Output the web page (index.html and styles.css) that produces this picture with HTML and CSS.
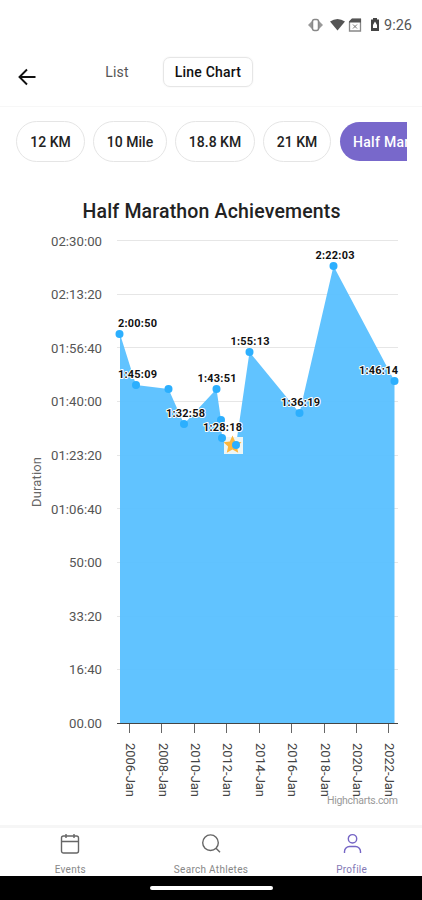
FILE: index.html
```html
<!DOCTYPE html>
<html lang="en">
  <head>
    <meta charset="UTF-8" />
    <meta name="viewport" content="width=device-width, initial-scale=1.0" />
    <title>Half Marathon Achievements</title>
    <link rel="stylesheet" href="styles.css">
  </head>
  <body>
    <div class="status-bar">
      <svg class="status-icons" width="74" height="20" viewBox="0 0 74 20">
        <!-- vibrate -->
        <path d="M4 6v8L0 10zM11 6v8l4-4z" fill="#999" />
        <rect x="4.500" y="4.500" width="6" height="11" rx="2" fill="#fff" stroke="#888" stroke-width="1.500" />
        <!-- wifi -->
        <path d="M22 6.500q7.500-5 15 0L29.500 15.500z" fill="#555" />
        <!-- sim card -->
        <path d="M44 4.500h8.500v11.500H41.500V7z" fill="#fff" stroke="#888" stroke-width="1.300" />
        <path d="M44 3.500h9v4H41V6.500z" fill="#555" />
        <path d="M45 9.500l4 4M49 9.500l-4 4" stroke="#777" />
        <!-- battery -->
        <path d="M65 3h4v1.500h2V16h-8V4.500h2z" fill="#444" />
        <path d="M67 6.500l-2 3.500v3h4v-3z" fill="#fff" />
      </svg>
      <span class="clock">9:26</span>
    </div>

    <header class="top-bar">
      <button class="back" type="button" aria-label="Back">
        <svg width="18" height="18" viewBox="0 0 18 18" fill="none" stroke="#111" stroke-width="1.900">
          <path d="M17.500 9H2M9 1.500L1.500 9 9 16.500" />
        </svg>
      </button>
      <button class="tab" type="button">List</button>
      <button class="tab tab-active" type="button">Line Chart</button>
    </header>

    <div class="chips">
      <button class="chip chip-12k" type="button">12 KM</button>
      <button class="chip chip-10m" type="button">10 Mile</button>
      <button class="chip chip-18k" type="button">18.8 KM</button>
      <button class="chip chip-21k" type="button">21 KM</button>
      <button class="chip chip-active" type="button">Half Marathon</button>
    </div>

    <main class="chart">
      <svg width="422" height="648" viewBox="0 177 422 648">
        <text class="chart-title" x="211.500" y="218" textLength="258">Half Marathon Achievements</text>

        <path class="grid" d="M117 240.500H398M117 294.500H398M117 347.500H398M117 401.500H398M117 455.500H398M117 508.500H398M117 562.500H398M117 616.500H398M117 669.500H398" />
        <path class="area" d="M120 723.500V334L136 385 168.500 389 184 424 216.500 389 221 420 222 438 236 445 249.500 352 299.500 413 333.500 266 394.500 381V723.500z" />
        <path class="axis" d="M117 723.500H398" />
        <path class="ticks" d="M129.500 724v9M161.500 724v9M194.500 724v9M226.500 724v9M259.500 724v9M291.500 724v9M324.500 724v9M356.500 724v9M388.500 724v9" />

        <g class="y-labels">
          <text x="102" y="245.500" textLength="51">02:30:00</text>
          <text x="102" y="299" textLength="51">02:13:20</text>
          <text x="102" y="352.500" textLength="51">01:56:40</text>
          <text x="102" y="406" textLength="51">01:40:00</text>
          <text x="102" y="459.500" textLength="51">01:23:20</text>
          <text x="102" y="513.500" textLength="51">01:06:40</text>
          <text x="102" y="567" textLength="33">50:00</text>
          <text x="102" y="620.500" textLength="33">33:20</text>
          <text x="102" y="674" textLength="33">16:40</text>
          <text x="102" y="728" textLength="33">00.00</text>
        </g>
        <text class="axis-title" transform="translate(41 482) rotate(-90)" text-anchor="middle" textLength="50">Duration</text>

        <g class="x-labels">
          <text transform="translate(126 743) rotate(90)" textLength="54">2006-Jan</text>
          <text transform="translate(158.500 743) rotate(90)" textLength="54">2008-Jan</text>
          <text transform="translate(191 743) rotate(90)" textLength="54">2010-Jan</text>
          <text transform="translate(223 743) rotate(90)" textLength="54">2012-Jan</text>
          <text transform="translate(255.500 743) rotate(90)" textLength="54">2014-Jan</text>
          <text transform="translate(288 743) rotate(90)" textLength="54">2016-Jan</text>
          <text transform="translate(320.500 743) rotate(90)" textLength="54">2018-Jan</text>
          <text transform="translate(353 743) rotate(90)" textLength="54">2020-Jan</text>
          <text transform="translate(385 743) rotate(90)" textLength="54">2022-Jan</text>
        </g>
        <text class="credits" x="398" y="803.500" textLength="71">Highcharts.com</text>

        <!-- personal best -->
        <rect x="224" y="437" width="19" height="17" fill="#eef6f5" />
        <path d="M232.500 435.500l2.700 6 6.300.7-4.600 4.200 1.300 6.300-5.700-3.200-5.700 3.200 1.300-6.300-4.600-4.200 6.300-.7z" fill="#fdb73e" />

        <g class="points">
          <circle cx="119.500" cy="334" r="4" />
          <circle cx="136" cy="385" r="4" />
          <circle cx="168.500" cy="389" r="4" />
          <circle cx="184" cy="424" r="4" />
          <circle cx="216.500" cy="389" r="4" />
          <circle cx="221" cy="420" r="4" />
          <circle cx="222" cy="438" r="4" />
          <circle cx="236" cy="445" r="4" />
          <circle cx="249.500" cy="352" r="4" />
          <circle cx="299.500" cy="413" r="4" />
          <circle cx="333.500" cy="266" r="4" />
          <circle cx="394.500" cy="381" r="4" />
        </g>

        <g class="point-labels">
          <text x="137.500" y="327" textLength="39">2:00:50</text>
          <text x="137.500" y="378" textLength="39">1:45:09</text>
          <text x="185.500" y="417" textLength="39">1:32:58</text>
          <text x="217" y="382" textLength="39">1:43:51</text>
          <text x="222.500" y="431" textLength="39">1:28:18</text>
          <text x="250" y="345" textLength="39">1:55:13</text>
          <text x="300.500" y="406" textLength="39">1:36:19</text>
          <text x="335" y="259" textLength="39">2:22:03</text>
          <text x="378.500" y="374" textLength="39">1:46:14</text>
        </g>
      </svg>
    </main>

    <nav class="bottom-nav">
      <a class="nav-item">
        <svg width="20" height="22" viewBox="0 0 20 22">
          <rect x="1.500" y="3" width="17" height="17" rx="2" />
          <path d="M1.500 8.500h17M6 1v4M14 1v4" />
        </svg>
        <span>Events</span>
      </a>
      <a class="nav-item">
        <svg width="20" height="22" viewBox="0 0 20 22">
          <circle cx="9.500" cy="9.700" r="7.800" />
          <path d="M15 15.200l4 4" />
        </svg>
        <span>Search Athletes</span>
      </a>
      <a class="nav-item nav-active">
        <svg width="20" height="22" viewBox="0 0 20 22">
          <circle cx="10.500" cy="5.800" r="4.200" />
          <path d="M2.500 20v-1.500a5 5 0 0 1 5-5h6a5 5 0 0 1 5 5V20" />
        </svg>
        <span>Profile</span>
      </a>
    </nav>

    <div class="gesture-bar"><div class="gesture-pill"></div></div>
  </body>
</html>
```
FILE: styles.css
```css
* {
  box-sizing: border-box;
}

body {
  margin: 0;
  width: 422px;
  height: 900px;
  display: flex;
  flex-direction: column;
  overflow: hidden;
  background-color: #fff;
  font-family: Roboto, "Liberation Sans", sans-serif;
}

button {
  border: none;
  background: none;
  padding: 0;
  font-family: inherit;
  color: #222;
}

/* status bar */
.status-bar {
  height: 50px;
  display: flex;
  align-items: center;
  justify-content: flex-end;
  gap: 2px;
  padding-right: 10px;
}

.clock {
  width: 28px;
  font-size: 14.500px;
  color: #555;
  white-space: nowrap;
}

/* header */
.top-bar {
  height: 57px;
  display: flex;
  align-items: flex-start;
  padding: 7px 0 0 18px;
  border-bottom: 1px solid #f7f7f7;
}

.back {
  width: 18px;
  height: 18px;
  margin-top: 11px;
}

.back svg {
  display: block;
}

.tab {
  height: 30px;
  width: 56px;
  margin-left: 53px;
  font-size: 14px;
  letter-spacing: 0.200px;
  color: #555;
}

.tab-active {
  width: 90px;
  margin-left: 18px;
  border: 1px solid #e6e6e6;
  border-radius: 7px;
  box-shadow: 0 0 2px #eee;
  font-weight: 500;
  color: #111;
}

/* distance chips */
.chips {
  height: 70px;
  width: 407px;
  display: flex;
  gap: 8px;
  padding: 14px 0 0 16px;
  overflow: hidden;
}

.chip {
  flex: none;
  height: 41px;
  border: 1px solid #e5e5e5;
  border-radius: 21px;
  font-size: 14px;
  font-weight: 500;
  white-space: nowrap;
}

.chip-12k {
  width: 69px;
}

.chip-10m {
  width: 74px;
}

.chip-18k {
  width: 80px;
}

.chip-21k {
  width: 68px;
}

.chip-active {
  width: 120px;
  height: 39px;
  margin: 1px 0 0 1px;
  padding-left: 13px;
  border: none;
  background-color: #7868cb;
  color: #fff;
  letter-spacing: 0.300px;
  text-align: left;
}

/* chart */
.chart {
  height: 648px;
}

.chart svg {
  display: block;
}

.chart-title {
  font-size: 19.500px;
  font-weight: 500;
  fill: #222;
  text-anchor: middle;
}

.area {
  fill: #57bfff;
  fill-opacity: 0.94;
}

.grid {
  stroke: #e6e6e6;
  fill: none;
}

.axis {
  stroke: #444;
}

.ticks {
  stroke: #666;
}

.y-labels {
  font-size: 13.200px;
  fill: #555;
  text-anchor: end;
}

.axis-title {
  font-size: 13px;
  fill: #666;
}

.x-labels {
  font-size: 13px;
  fill: #444;
}

.credits {
  font-size: 10.500px;
  fill: #999;
  text-anchor: end;
}

.points {
  fill: #2caffe;
}

.point-labels {
  font-size: 11px;
  font-weight: 700;
  fill: #111;
  stroke: #fff;
  stroke-width: 2px;
  stroke-linejoin: round;
  paint-order: stroke;
  text-anchor: middle;
}

/* bottom navigation */
.bottom-nav {
  height: 51px;
  display: flex;
  border-top: 3px solid #f6f6f6;
}

.nav-item {
  flex: 1;
  display: flex;
  flex-direction: column;
  align-items: center;
  padding-top: 5px;
  font-size: 10px;
  line-height: 12px;
  letter-spacing: 0.300px;
  color: #888;
}

.nav-item svg {
  flex: none;
  margin-bottom: 9px;
  fill: none;
  stroke: #666;
  stroke-width: 1.400;
}

.nav-active {
  color: #8579b5;
}

.nav-active svg {
  stroke: #7565c5;
}

.gesture-bar {
  height: 24px;
  display: flex;
  justify-content: center;
  padding-top: 10px;
  background-color: #000;
}

.gesture-pill {
  width: 123px;
  height: 4px;
  border-radius: 2px;
  background-color: #fff;
}
```
